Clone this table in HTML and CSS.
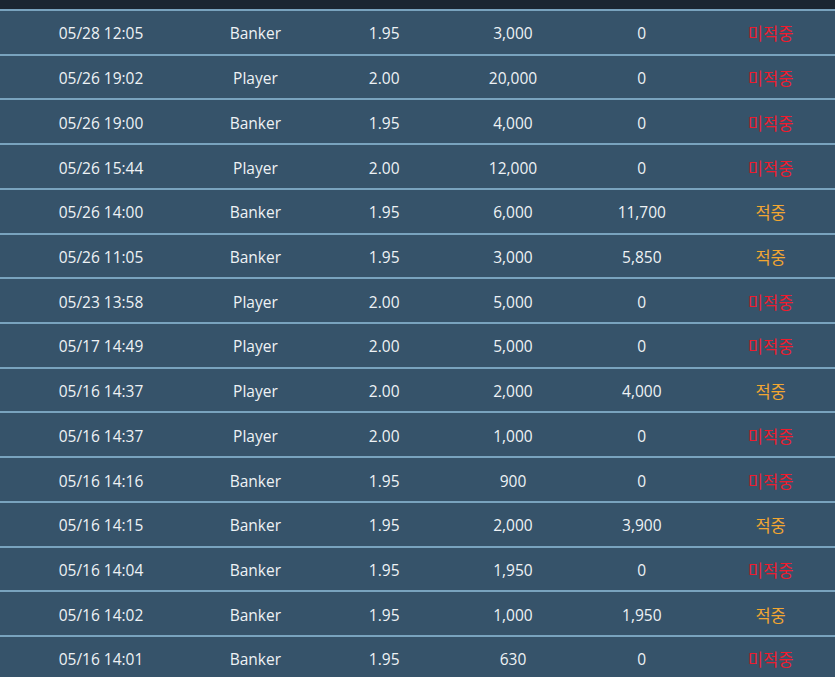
FILE: index.html
```html
<!DOCTYPE html>
<html lang="ko">
<head>
    <meta charset="UTF-8">
    <meta name="viewport" content="width=device-width, initial-scale=1.0">
    <title>Bet History</title>

    <!-- style -->
    <link rel="stylesheet" href="styles.css">

</head>
<body>
    <div class="history">
      <div class="history-head"></div>

      <div class="row"><span>05/28 12:05</span><span>Banker</span><span>1.95</span><span>3,000</span><span>0</span><span class="lose">미적중</span></div>
      <div class="row"><span>05/26 19:02</span><span>Player</span><span>2.00</span><span>20,000</span><span>0</span><span class="lose">미적중</span></div>
      <div class="row"><span>05/26 19:00</span><span>Banker</span><span>1.95</span><span>4,000</span><span>0</span><span class="lose">미적중</span></div>
      <div class="row"><span>05/26 15:44</span><span>Player</span><span>2.00</span><span>12,000</span><span>0</span><span class="lose">미적중</span></div>
      <div class="row"><span>05/26 14:00</span><span>Banker</span><span>1.95</span><span>6,000</span><span>11,700</span><span class="win">적중</span></div>
      <div class="row"><span>05/26 11:05</span><span>Banker</span><span>1.95</span><span>3,000</span><span>5,850</span><span class="win">적중</span></div>
      <div class="row"><span>05/23 13:58</span><span>Player</span><span>2.00</span><span>5,000</span><span>0</span><span class="lose">미적중</span></div>
      <div class="row"><span>05/17 14:49</span><span>Player</span><span>2.00</span><span>5,000</span><span>0</span><span class="lose">미적중</span></div>
      <div class="row"><span>05/16 14:37</span><span>Player</span><span>2.00</span><span>2,000</span><span>4,000</span><span class="win">적중</span></div>
      <div class="row"><span>05/16 14:37</span><span>Player</span><span>2.00</span><span>1,000</span><span>0</span><span class="lose">미적중</span></div>
      <div class="row"><span>05/16 14:16</span><span>Banker</span><span>1.95</span><span>900</span><span>0</span><span class="lose">미적중</span></div>
      <div class="row"><span>05/16 14:15</span><span>Banker</span><span>1.95</span><span>2,000</span><span>3,900</span><span class="win">적중</span></div>
      <div class="row"><span>05/16 14:04</span><span>Banker</span><span>1.95</span><span>1,950</span><span>0</span><span class="lose">미적중</span></div>
      <div class="row"><span>05/16 14:02</span><span>Banker</span><span>1.95</span><span>1,000</span><span>1,950</span><span class="win">적중</span></div>
      <div class="row"><span>05/16 14:01</span><span>Banker</span><span>1.95</span><span>630</span><span>0</span><span class="lose">미적중</span></div>
    </div>
</body>
</html>
```

FILE: styles.css
```css
body {
    margin: 0;
    font-family: "Open Sans", "Noto Sans CJK KR", sans-serif;
    background-color: #36536a;
    overflow: hidden;
}

.history {
    display: flex;
    flex-direction: column;
}

.history-head {
    height: 9px;
    background-color: #1b2631;
}

.row {
    display: grid;
    grid-template-columns: 180px repeat(5, 1fr);
    align-items: center;
    box-sizing: border-box;
    height: 44.73px;
    padding: 2px 0 0 11px;
    border-top: 2px solid #79a3be;
    background-color: #36536a;
    color: #eef2f5;
    font-size: 15.5px;
}

.row span {
    text-align: center;
}

.lose, .win {
    font-size: 16.5px;
}

.lose {
    color: #ee1c2e;
}

.win {
    color: #f2a631;
}
```
